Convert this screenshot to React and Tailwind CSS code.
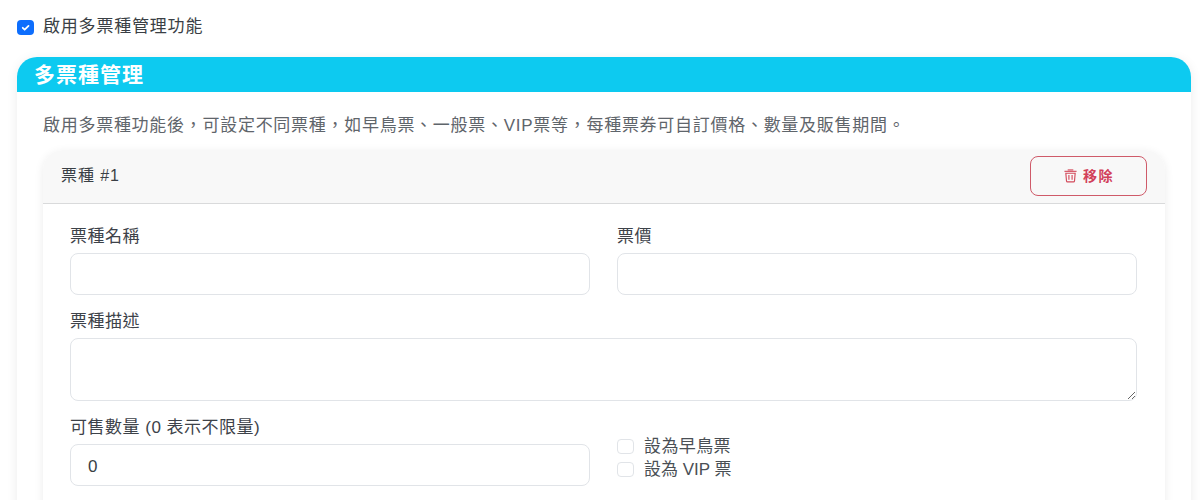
import React from "react";

function Label({ children }) {
  return <label className="block h-[24px] text-[17px] leading-[24px] tracking-[0.5px] text-[#3d4249]">{children}</label>;
}

function Trash() {
  return (
    <svg width="15" height="14" viewBox="0 0 16 15" fill="none" stroke="#d2495a" strokeWidth="1.2" className="shrink-0">
      <path d="M1.5 2.5h13" />
      <path d="M5 1h6" />
      <path d="M3 4.5h10l-.7 8.2a1.2 1.2 0 0 1-1.2 1.1H4.9a1.2 1.2 0 0 1-1.2-1.1z" />
      <path d="M6.3 6.5v5M9.7 6.5v5" />
    </svg>
  );
}

export default function App() {
  return (
    <div className="h-[500px] overflow-hidden bg-white pl-[17px] pr-[9px] pt-[17px] font-['Liberation_Sans','Noto_Sans_CJK_TC',sans-serif]">
      <div className="flex h-[20px] items-center">
        <span className="flex h-[15px] w-[17px] items-center justify-center rounded-[4px] bg-[#0d6efd]">
          <svg width="11" height="11" viewBox="0 0 20 20" fill="none" stroke="#fff" strokeWidth="3.2" strokeLinecap="round" strokeLinejoin="round">
            <path d="M5 10.5l3.5 3.5 7-7" />
          </svg>
        </span>
        <span className="ml-[9px] text-[17px] tracking-[0.8px] text-[#3a3f45]">啟用多票種管理功能</span>
      </div>

      <div className="mt-[20px] rounded-t-[20px] bg-white shadow-[0_2px_12px_rgba(0,0,0,0.08)]">
        <div className="flex h-[35px] items-center rounded-t-[20px] bg-[#0dcaf0] pl-[17px] text-[21px] font-bold tracking-[1px] text-white">
          多票種管理
        </div>
        <div className="px-[26px] pb-[40px] pt-[22px]">
          <p className="h-[36px] text-[17px] leading-[24px] tracking-[0.72px] text-[#5f656b]">
            啟用多票種功能後，可設定不同票種，如早鳥票、一般票、VIP票等，每種票券可自訂價格、數量及販售期間。
          </p>
          <div className="rounded-t-[20px] bg-white shadow-[0_2px_10px_rgba(0,0,0,0.08)]">
            <div className="flex h-[54px] items-start justify-between rounded-t-[20px] border-b border-[#d9dadb] bg-[#f8f8f8] pl-[18px] pr-[18px] pt-[6px]">
              <span className="mt-[8px] text-[16px] leading-[24px] tracking-[0.9px] text-[#3a3f45]">票種 #1</span>
              <button className="flex h-[40px] w-[117px] items-center justify-center gap-[5px] rounded-[8px] border border-[#cf5a69] text-[14px] font-bold tracking-[1.6px] text-[#d2405a]">
                <Trash />
                移除
              </button>
            </div>
            <div className="pb-[40px] pl-[27px] pr-[28px] pt-[21px]">
              <div className="grid grid-cols-2 gap-x-[27px]">
                <div>
                  <Label>票種名稱</Label>
                  <input className="mt-[4px] block h-[42px] w-full rounded-[8px] border border-[#e1e4e8] bg-white" />
                </div>
                <div>
                  <Label>票價</Label>
                  <input className="mt-[4px] block h-[42px] w-full rounded-[8px] border border-[#e1e4e8] bg-white" />
                </div>
              </div>
              <div className="mt-[15px]">
                <Label>票種描述</Label>
                <textarea className="mt-[4px] block h-[63px] w-full rounded-[8px] border border-[#e1e4e8] bg-white" />
              </div>
              <div className="mt-[15px] grid grid-cols-2 gap-x-[27px]">
                <div>
                  <Label>可售數量 (0 表示不限量)</Label>
                  <input
                    defaultValue="0"
                    className="mt-[4px] block h-[42px] w-full rounded-[8px] border border-[#e1e4e8] bg-white px-[17px] pt-[3px] text-[17px] text-[#3a3f45]"
                  />
                </div>
                <div className="flex flex-col pt-[19px]">
                  <div className="flex h-[23px] items-center">
                    <span className="h-[15px] w-[17px] rounded-[4px] border border-[#e1e4e8]" />
                    <span className="ml-[10px] text-[17px] tracking-[0.4px] text-[#4a4f55]">設為早鳥票</span>
                  </div>
                  <div className="flex h-[23px] items-center">
                    <span className="h-[15px] w-[17px] rounded-[4px] border border-[#e1e4e8]" />
                    <span className="ml-[10px] text-[17px] tracking-[0px] text-[#4a4f55]">設為 VIP 票</span>
                  </div>
                </div>
              </div>
            </div>
          </div>
        </div>
      </div>
    </div>
  );
}
